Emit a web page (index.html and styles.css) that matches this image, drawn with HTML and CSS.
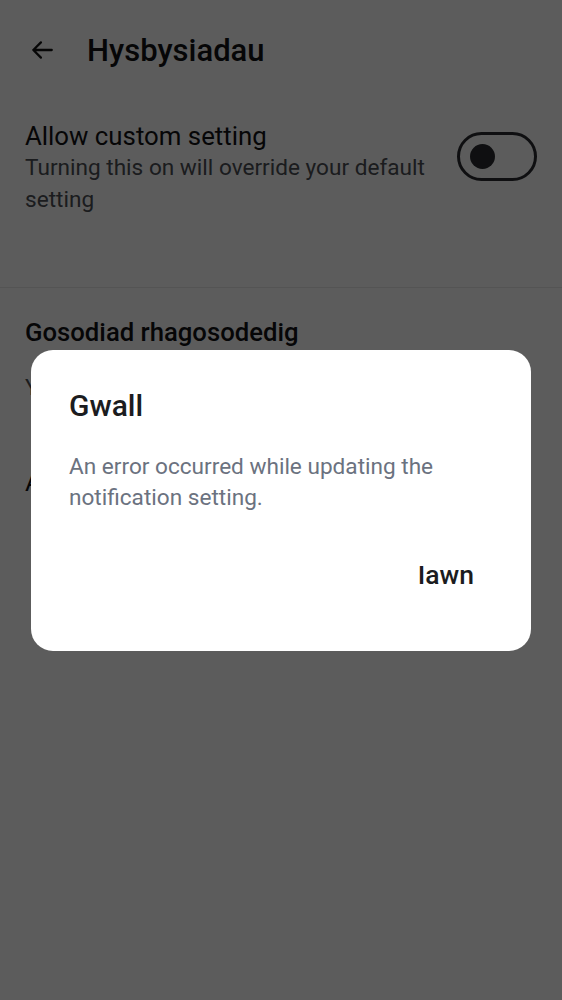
FILE: index.html
```html
<!DOCTYPE html>
<html lang="cy">
<head>
<meta charset="utf-8">
<title>Hysbysiadau</title>
<link rel="stylesheet" href="styles.css">
</head>
<body>
<div class="page">
  <header class="topbar">
    <span class="back">
      <svg width="26" height="26" viewBox="0 0 24 24"><path d="M21 12H4M11 5l-7 7 7 7" fill="none" stroke="#111" stroke-width="2.1" stroke-linecap="round" stroke-linejoin="round"/></svg>
    </span>
    <h1 class="title">Hysbysiadau</h1>
  </header>

  <section class="row">
    <div class="row-text">
      <div class="row-title">Allow custom setting</div>
      <div class="row-sub">Turning this on will override your default setting</div>
    </div>
    <div class="toggle"><span class="knob"></span></div>
  </section>

  <div class="divider"></div>

  <section class="defaults">
    <div class="sec-title">Gosodiad rhagosodedig</div>
    <div class="sec-sub">Your default setting for notifications</div>
    <div class="option">All activity</div>
  </section>
</div>

<div class="overlay">
  <div class="dialog">
    <div class="dlg-title">Gwall</div>
    <div class="dlg-body">An error occurred while updating the notification setting.</div>
    <div class="dlg-actions"><span class="dlg-btn">Iawn</span></div>
  </div>
</div>
</body>
</html>
```

FILE: styles.css
```css
* { box-sizing: border-box; }
html, body { margin: 0; padding: 0; }
body {
  font-family: Roboto, "Noto Sans", "Liberation Sans", sans-serif;
  background: #ffffff;
  color: #111214;
  width: 562px;
  height: 1000px;
  overflow: hidden;
}
.page { padding: 0 25px; }
.topbar {
  display: flex;
  align-items: center;
  height: 100px;
  gap: 32px;
  padding-left: 4px;
}
.back { display: flex; width: 26px; height: 26px; }
.title {
  margin: 0;
  font-size: 31px;
  font-weight: 500;
  color: #111214;
}
.row {
  display: flex;
  align-items: flex-start;
  justify-content: space-between;
  padding-top: 20px;
  height: 187px;
}
.row-text { width: 415px; }
.row-title { font-size: 25.8px; line-height: 32px; color: #111214; }
.row-sub { font-size: 22.6px; line-height: 32px; color: #4b4f55; }
.toggle {
  width: 80px;
  height: 49px;
  border: 3px solid #2a2c30;
  border-radius: 25px;
  margin-top: 12px;
  display: flex;
  align-items: center;
  padding-left: 10px;
}
.knob { width: 25px; height: 25px; border-radius: 50%; background: #2a2c30; }
.divider { height: 1px; background: #e8e8e8; margin: 0 -25px; }
.defaults { padding-top: 28px; }
.sec-title { font-size: 25.7px; font-weight: 500; line-height: 32px; }
.sec-sub { font-size: 22.6px; line-height: 32px; color: #4b4f55; margin-top: 24px; }
.option { font-size: 25.7px; line-height: 32px; margin-top: 62px; }

.overlay {
  position: fixed;
  inset: 0;
  background: rgba(0, 0, 0, 0.64);
  display: flex;
  align-items: center;
  justify-content: center;
}
.dialog {
  width: 500px;
  height: 301px;
  background: #fff;
  border-radius: 22px;
  padding: 36px 38px 0 38px;
  display: flex;
  flex-direction: column;
}
.dlg-title { font-size: 30px; font-weight: 500; line-height: 40px; color: #1b1c20; }
.dlg-body { margin-top: 25px; font-size: 22.6px; line-height: 31px; color: #6b7280; }
.dlg-actions { display: flex; justify-content: flex-end; margin-top: 46px; padding-right: 19px; }
.dlg-btn { font-size: 26.5px; font-weight: 500; color: #1b1c20; line-height: 32px; }
```
